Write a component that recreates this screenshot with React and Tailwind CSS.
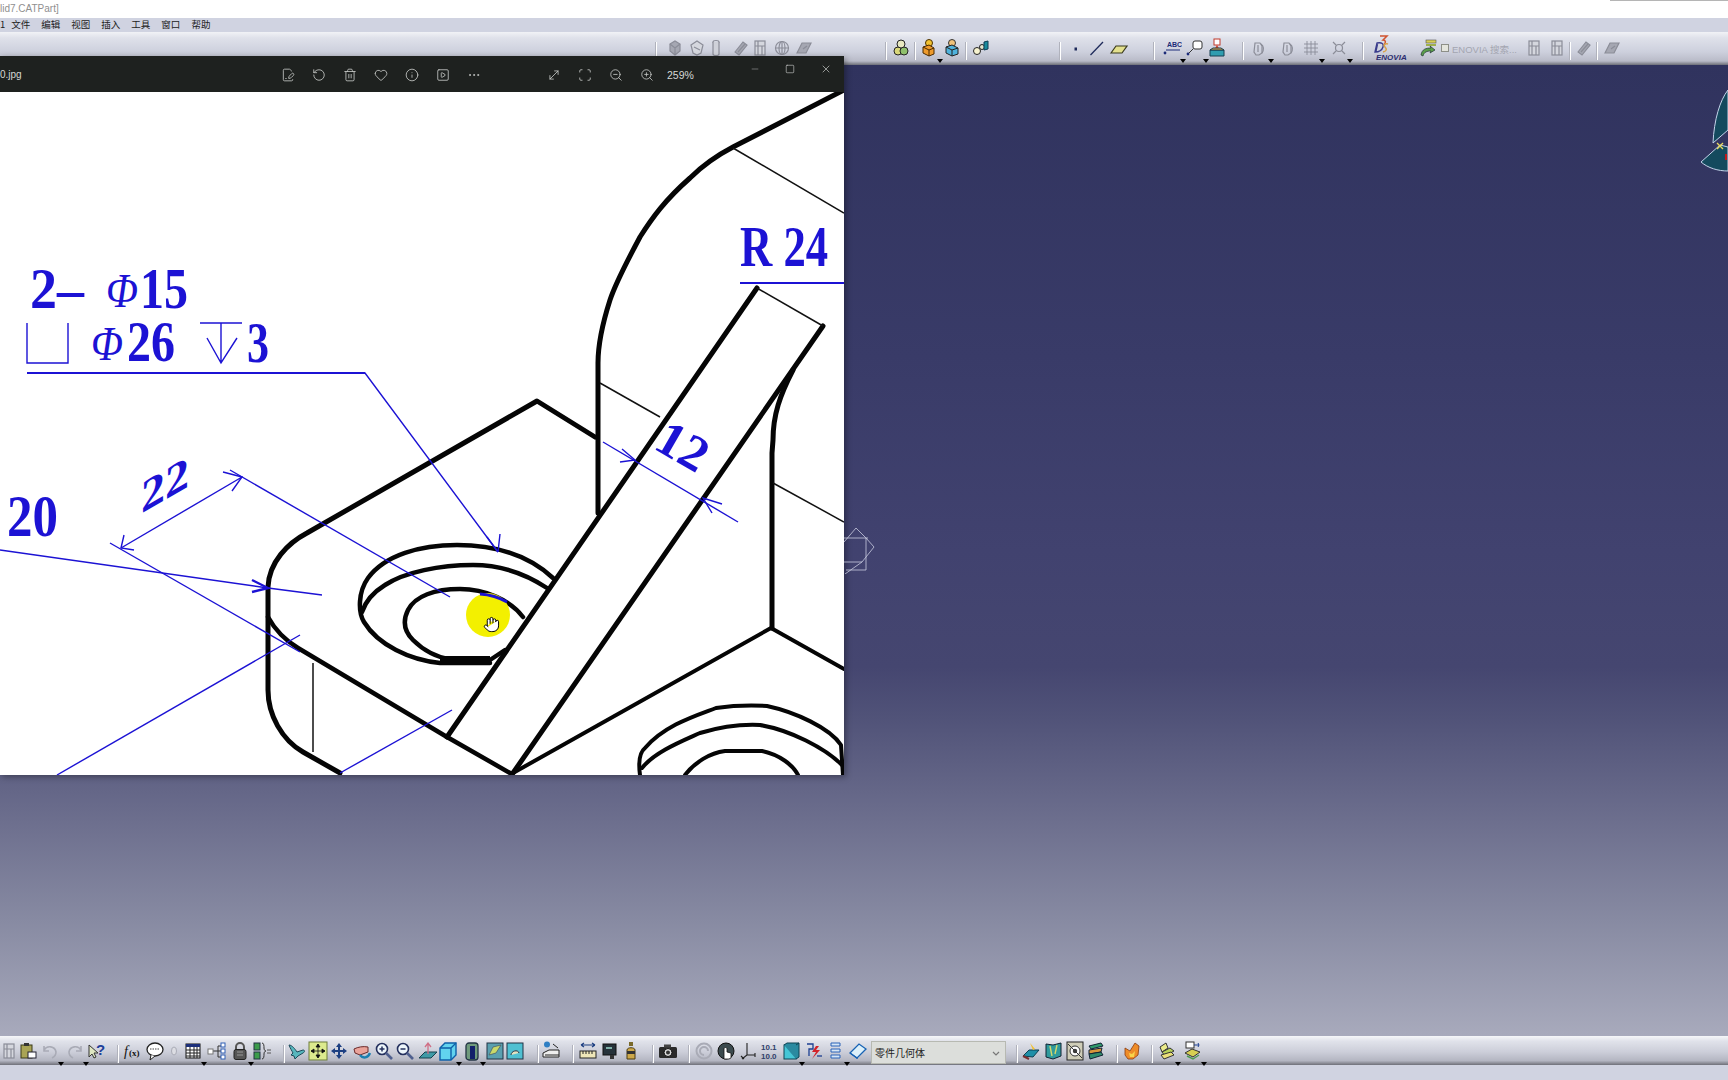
import React from "react";
import {
  FilePenLine, RotateCcw, Trash2, Heart, Info, SquarePlay, Ellipsis,
  MoveDiagonal2, Scan, ZoomIn, ZoomOut, Minus, Square, X, Hand,
} from "lucide-react";

const Ico = ({ children }) => (
  <svg viewBox="0 0 20 20" className="h-5 w-5">{children}</svg>
);

// toolbar cell, m is the left gap to the previous cell
const Slot = ({ m, arrow, children }) => (
  <div className={`relative h-5 w-5 shrink-0 ${m}`}>
    <Ico>{children}</Ico>
    {arrow && (
      <span className="absolute right-[-4px] bottom-[-5px] h-0 w-0 border-x-[3px] border-t-[4px] border-x-transparent border-t-black" />
    )}
  </div>
);

const Sep = ({ m }) => (
  <div className={`h-[18px] w-0.5 shrink-0 self-start mt-1 border-l border-[#b0b2bc] border-r border-r-white ${m}`} />
);

const G = "#a9abb6";
const GD = "#8b8d98";
const Faded = ({ kind = 0 }) => (
  <g fill="none" stroke={GD} strokeWidth="1.2">
    {kind === 0 && <><path d="M5 6l5-3 5 3v7l-5 4-5-4z" fill="#a5a7b2" /><path d="M5 6l5 4 5-4M10 10v7" /></>}
    {kind === 1 && <><path d="M4 7l6-4 6 4-2 8-4 2-4-2z" fill="#d5d7de" /><path d="M7 9l6 3" /></>}
    {kind === 2 && <><ellipse cx="10" cy="4" rx="3" ry="1.5" /><path d="M7 4v12c0 2 6 2 6 0V4" fill="#cfd1d9" /></>}
    {kind === 3 && <><path d="M4 14L12 4l4 3-8 10z" fill="#a5a7b2" /><path d="M7 14l7-8" /></>}
    {kind === 4 && <><rect x="5" y="3" width="10" height="14" fill="#d5d7de" /><path d="M5 8h10M8 3v14M12 8v9" /></>}
    {kind === 5 && <><circle cx="10" cy="10" r="6.5" /><path d="M3.5 10h13M10 3.5v13" /><ellipse cx="10" cy="10" rx="3" ry="6.5" /></>}
    {kind === 6 && <><path d="M3 15l5-10h9l-5 10z" fill="#a5a7b2" /><path d="M9 11l4-3" /></>}
    {kind === 7 && <><path d="M5 5h5l2 3v7l-3 2H6l-2-3z" /><path d="M8 7v7M11 6c3 2 3 6 1 9" /></>}
    {kind === 8 && <><path d="M6 3v14M10 3v14M14 3v14M3 6h14M3 10h14M3 14h14" strokeWidth="0.9" /></>}
    {kind === 9 && <><circle cx="10" cy="10" r="3.5" /><path d="M4 4l3 3M16 4l-3 3M4 16l3-3M16 16l-3-3" /></>}
  </g>
);

const Lens = ({ plus }) => (
  <>
    <circle cx="8" cy="8" r="5.5" fill="#eef6fb" stroke="#24305e" strokeWidth="1.6" />
    <path d="M5.5 8h5" stroke="#24305e" strokeWidth="1.5" />
    {plus && <path d="M8 5.5v5" stroke="#24305e" strokeWidth="1.5" />}
    <path d="M12 12l6 6" stroke="#4f5f8e" strokeWidth="2.6" />
  </>
);

function TopToolbar() {
  return (
    <div className="flex h-[33px] w-full items-start bg-[linear-gradient(to_bottom,#f1f2f6_0%,#dfe1ea_18%,#cdd0dd_60%,#b9bbc8_88%,#6d6f78_100%)] pt-1.5">
      <Sep m="ml-[655px]" />
      <Slot m="ml-[8px]"><Faded kind={0} /></Slot>
      <Slot m="ml-[2px]"><Faded kind={1} /></Slot>
      <Slot m="ml-[-1px]"><Faded kind={2} /></Slot>
      <Slot m="ml-[5px]"><Faded kind={3} /></Slot>
      <Slot m="ml-[-1px]"><Faded kind={4} /></Slot>
      <Slot m="ml-[2px]"><Faded kind={5} /></Slot>
      <Slot m="ml-[2px]"><Faded kind={6} /></Slot>
      <Sep m="ml-[71px]" />
      <Slot m="ml-[4px]">
        <circle cx="7" cy="13" r="4" fill="#d9d77a" stroke="#222" />
        <circle cx="13" cy="13" r="4" fill="#8fc06c" stroke="#222" />
        <circle cx="10" cy="6" r="4" fill="#e8e8c0" stroke="#222" />
      </Slot>
      <Sep m="ml-[3px]" />
      <Slot m="ml-[3px]" arrow>
        <circle cx="10" cy="5" r="3.5" fill="#f2c230" stroke="#4a3000" />
        <path d="M4 9l6-2 5 3v6l-5 2-6-3z" fill="#ed9a2c" stroke="#4a2a00" />
        <path d="M4 9l6 3 5-2M10 12v6" fill="none" stroke="#4a2a00" />
      </Slot>
      <Slot m="ml-[3px]">
        <circle cx="10" cy="5" r="3.5" fill="#f0c27a" stroke="#333" />
        <path d="M4 9l6-2 6 3v6l-6 2-6-3z" fill="#4fb2dc" stroke="#222" />
        <path d="M4 9l6 3 6-2M10 12v6" fill="none" stroke="#222" />
      </Slot>
      <Sep m="ml-[3px]" />
      <Slot m="ml-[4px]">
        <circle cx="6" cy="13" r="3.5" fill="#f7f3cf" stroke="#222" />
        <circle cx="11" cy="9" r="2.5" fill="#e7e7d0" stroke="#222" />
        <path d="M13 4l4-1v8l-4 1z" fill="#188a9c" stroke="#0d3d55" />
      </Slot>
      <Sep m="ml-[68px]" />
      <Slot m="ml-[5px]"><rect x="8.5" y="9.5" width="2.5" height="3" fill="#1e2a5a" /></Slot>
      <Slot m="ml-[1px]"><path d="M3.5 17L16 4" stroke="#1e2a5a" strokeWidth="1.3" /></Slot>
      <Slot m="ml-[2px]"><path d="M2 15l5-7h11l-5 7z" fill="#e3e08e" stroke="#39391c" strokeWidth="1.2" /></Slot>
      <Sep m="ml-[24px]" />
      <Slot m="ml-[7px]" arrow>
        <text x="5" y="9" fontSize="7" fontWeight="700" fill="#1c2b78" fontFamily="Liberation Sans, sans-serif">ABC</text>
        <path d="M4 12h14" stroke="#1c2b78" />
        <circle cx="3" cy="15" r="1.4" fill="#1c2b78" />
      </Slot>
      <Slot m="ml-[3px]" arrow>
        <rect x="8" y="3" width="9" height="8" rx="2" fill="#fff" stroke="#333" />
        <path d="M8 11l-4 4" stroke="#333" />
        <circle cx="3" cy="16" r="1.4" fill="#1c2b78" />
      </Slot>
      <Slot m="ml-[2px]">
        <rect x="7" y="1" width="6" height="6" fill="#fff" stroke="#c0392b" />
        <path d="M10 7l-3 5h6z" fill="#d8452a" />
        <path d="M3 12h14v6H3z" fill="#2f9db0" stroke="#173f50" />
        <path d="M3 12l3-2h8l3 2z" fill="#e9a94a" stroke="#173f50" />
      </Slot>
      <Sep m="ml-[15px]" />
      <Slot m="ml-[6px]" arrow><Faded kind={7} /></Slot>
      <Slot m="ml-[9px]"><Faded kind={7} /></Slot>
      <Slot m="ml-[2px]" arrow><Faded kind={8} /></Slot>
      <Slot m="ml-[8px]" arrow><Faded kind={9} /></Slot>
      <Sep m="ml-[13px]" />
      <div className="ml-[6px] mt-[-3px] flex h-[28px] w-10 shrink-0 flex-col items-start self-start">
        {/* 3DS mark */}
        <svg viewBox="0 0 22 19" className="ml-[3px] h-[19px] w-[22px] shrink-0">
          <path d="M7 1h7l-4 4c3 0 3 3 1 4" fill="none" stroke="#d0532f" strokeWidth="1.5" />
          <path d="M4 8c5-1 7 1 6 4s-4 5-8 5zM4.5 9L3 16" fill="none" stroke="#3a3c8c" strokeWidth="1.4" />
          <path d="M15 9c-3-1-5 1-3 3s2 4-2 5" fill="none" stroke="#d9a24a" strokeWidth="1.6" />
        </svg>
        <span className="ml-[6px] font-['Liberation_Sans',sans-serif] text-[8px] leading-[8px] font-bold italic text-[#2b2d70]">ENOVIA</span>
      </div>
      <Slot m="ml-[8px]">
        <rect x="8" y="2" width="10" height="3" fill="#d8cf55" stroke="#555" strokeWidth="0.6" />
        <rect x="8" y="6" width="10" height="2" fill="#9fb04d" />
        <path d="M3 17c1-6 5-7 10-7l-1-2 5 4-5 3 1-2c-4 0-7 1-8 5z" fill="#5a9e4a" stroke="#233" strokeWidth="0.7" />
      </Slot>
      <div className="ml-[3px] mt-1.5 h-2 w-2 shrink-0 border border-[#8d8f88] bg-[#e4e5dd]" />
      <div className="ml-[3px] mt-1 h-4 w-[67px] shrink-0 overflow-hidden whitespace-nowrap font-['Liberation_Sans','Noto_Sans_CJK_SC',sans-serif] text-[9.5px] leading-4 text-[#a3a5b0]">ENOVIA 搜索...</div>
      <Slot m="ml-[5px]"><Faded kind={4} /></Slot>
      <Slot m="ml-[3px]"><Faded kind={4} /></Slot>
      <Sep m="ml-[2px]" />
      <Slot m="ml-[3px]"><Faded kind={3} /></Slot>
      <Sep m="ml-[2px]" />
      <Slot m="ml-[4px]"><Faded kind={6} /></Slot>
    </div>
  );
}

function BottomToolbar() {
  return (
    <div className="flex h-[29px] w-full shrink-0 items-start bg-[linear-gradient(to_bottom,#f6f7f9_0%,#e0e2ea_18%,#ccced9_55%,#b4b6c2_85%,#6f7079_100%)] pt-[5px]">
      <Slot m="ml-[-1px]"><Faded kind={4} /></Slot>
      <Slot m="ml-[-1px]">
        <rect x="3" y="4" width="11" height="13" fill="#a9a455" stroke="#3b3a1a" />
        <rect x="6" y="2" width="5" height="3" fill="#333" />
        <rect x="10" y="11" width="8" height="6" fill="#fff" stroke="#223" />
      </Slot>
      <Slot m="ml-[2px]" arrow><path d="M4 9c3-5 11-4 12 2 0 3-2 5-4 6M4 5v5h5" fill="none" stroke={G} strokeWidth="1.6" /></Slot>
      <Slot m="ml-[5px]" arrow><path d="M16 9c-3-5-11-4-12 2 0 3 2 5 4 6M16 5v5h-5" fill="none" stroke={G} strokeWidth="1.6" /></Slot>
      <Slot m="ml-[1px]">
        <path d="M3 4v12l3-3 2 4 2-1-2-4h4z" fill="#dfe7c2" stroke="#333" />
        <text x="10" y="14" fontSize="15" fontWeight="700" fill="#1d3f9a" fontFamily="Liberation Sans, sans-serif">?</text>
      </Slot>
      <Sep m="ml-[11px]" />
      <Slot m="ml-[4px]"><text x="1" y="15" fontSize="14" fontFamily="Liberation Serif, serif" fill="#111" fontStyle="italic">f</text><text x="6" y="15" fontSize="9" fontWeight="700" fontFamily="Liberation Serif, serif" fill="#111">(x)</text></Slot>
      <Slot m="ml-[2px]">
        <ellipse cx="10" cy="8.5" rx="8" ry="6.5" fill="#fff" stroke="#222" strokeWidth="1.3" />
        <path d="M6 14l-1 5 5-4" fill="#fff" stroke="#222" />
        <path d="M5 8h10" stroke="#444" strokeDasharray="1.5 1" />
      </Slot>
      <Slot m="ml-[-1px]"><ellipse cx="10" cy="10" rx="2.5" ry="4" fill="#dcdde3" stroke={G} /></Slot>
      <Slot m="ml-[-1px]" arrow>
        <rect x="3" y="3" width="14" height="14" fill="#fff" stroke="#111" />
        <rect x="3" y="3" width="14" height="3" fill="#1c2f7a" />
        <path d="M3 9h14M3 12h14M3 15h14M7 6v11M11 6v11M14 6v11" stroke="#222" />
      </Slot>
      <Slot m="ml-[4px]">
        <path d="M5 10h6M11 5v11M11 5h3M11 10h3M11 16h3" fill="none" stroke="#333" />
        <rect x="1" y="8" width="5" height="5" fill="#fff" stroke="#777" />
        <rect x="14" y="2" width="4" height="4" fill="#fff" stroke="#2e5fb5" />
        <rect x="14" y="8" width="4" height="4" fill="#fff" stroke="#2e5fb5" />
        <rect x="14" y="14" width="4" height="4" fill="#fff" stroke="#2e5fb5" />
      </Slot>
      <Slot m="ml-[3px]" arrow>
        <path d="M6 9V6a4 4 0 018 0v3" fill="none" stroke="#555" strokeWidth="2" />
        <rect x="4" y="8.5" width="12" height="10" rx="2" fill="#555" stroke="#222" />
        <path d="M7 11h6M7 14h6" stroke="#999" />
      </Slot>
      <Slot m="ml-[2px]">
        <rect x="2" y="2" width="6" height="7" fill="#3c9c4c" stroke="#234" />
        <rect x="2" y="11" width="6" height="7" fill="#3c9c4c" stroke="#234" />
        <path d="M10 2c2 0 2 3 2 5s1 3 2 3c-1 0-2 1-2 3s0 5-2 5" fill="none" stroke="#333" />
        <path d="M15 9h4M15 12h4" stroke="#555" />
      </Slot>
      <Sep m="ml-[11px]" />
      <Slot m="ml-[2px]">
        <path d="M2 4c3 0 6 4 8 7l6-2c2 0 2 2 0 3l-5 3-3 3-1-3-3-1 2-2C5 10 3 7 2 4z" fill="#57b6bd" stroke="#1c4a5a" />
      </Slot>
      <Slot m="ml-[1px]">
        <rect x="1" y="1" width="18" height="18" fill="#dcea8e" stroke="#6c7c3a" />
        <path d="M10 3v14M3 10h14M10 3l-2 3h4zM10 17l-2-3h4zM3 10l3-2v4zM17 10l-3-2v4z" fill="#111" stroke="#111" strokeWidth="0.8" />
      </Slot>
      <Slot m="ml-[1px]">
        <path d="M10 2l3 4h-2v3h3V7l4 3-4 3v-2h-3v3h2l-3 4-3-4h2v-3H6v2l-4-3 4-3v2h3V6H7z" fill="#1c3f82" />
      </Slot>
      <Slot m="ml-[3px]">
        <path d="M2 8c4-2 9-3 14-2v5l-8 3-5-2z" fill="#eaa39a" stroke="#6a2a2a" />
        <path d="M8 14c3 4 8 3 10-2" fill="none" stroke="#1b7fb0" strokeWidth="2.4" />
      </Slot>
      <Slot m="ml-[2px]"><Lens plus /></Slot>
      <Slot m="ml-[1px]"><Lens /></Slot>
      <Slot m="ml-[3px]">
        <path d="M1 17l6-6h12l-6 6z" fill="#3f9aa6" stroke="#17414e" />
        <path d="M10 13V3M7 6l3-4 3 4" fill="none" stroke="#d06f86" strokeWidth="1.3" />
      </Slot>
      <Slot m="ml-[0px]" arrow>
        <path d="M2 7l5-5h11v12l-5 5H2z" fill="#62d3ee" stroke="#0d5fa8" strokeWidth="1.4" />
        <path d="M2 7h11v12M13 7l5-5" fill="none" stroke="#0d5fa8" strokeWidth="1.4" />
      </Slot>
      <Slot m="ml-[4px]" arrow>
        <rect x="4" y="2" width="12" height="17" rx="3" fill="#6f9a7c" stroke="#234" strokeWidth="1.3" />
        <rect x="8" y="5" width="5" height="13" fill="#12206a" />
      </Slot>
      <Slot m="ml-[3px]">
        <rect x="2" y="2" width="16" height="16" fill="#5aa0b0" stroke="#234" />
        <path d="M4 14l4-8 8-2-5 8z" fill="#c9d96a" stroke="#456" strokeWidth="0.7" />
      </Slot>
      <Slot m="ml-[0px]">
        <rect x="2" y="2" width="16" height="16" fill="#4fc0d2" stroke="#234" />
        <path d="M6 14c0-4 7-6 8-2" fill="#e4e2c0" stroke="#234" />
      </Slot>
      <Sep m="ml-[12px]" />
      <Slot m="ml-[2px]">
        <circle cx="6" cy="3.5" r="3" fill="#2f7fc4" />
        <path d="M2 12l6-3h10v7H2z" fill="#eee" stroke="#222" />
        <path d="M4 14h14M12 3l5 4" stroke="#222" />
      </Slot>
      <Sep m="ml-[11px]" />
      <Slot m="ml-[4px]">
        <path d="M3 4h14M3 4l3-2M3 4l3 2M17 4l-3-2M17 4l-3 2" fill="none" stroke="#1d3f82" strokeWidth="1.2" />
        <rect x="2" y="10" width="16" height="7" fill="#eee6b8" stroke="#222" />
        <path d="M5 10v3M8 10v3M11 10v3M14 10v3" stroke="#222" />
      </Slot>
      <Slot m="ml-[2px]">
        <rect x="3" y="3" width="13" height="11" fill="#26323a" stroke="#111" />
        <rect x="6" y="6" width="6" height="2" fill="#7fb0a8" />
        <rect x="10" y="14" width="4" height="4" fill="#333" />
      </Slot>
      <Slot m="ml-[1px]">
        <rect x="8" y="1" width="4" height="4" fill="#7a6a2a" />
        <path d="M6 9c0-3 8-3 8 0v9H6z" fill="#cda84a" stroke="#4a3a10" />
        <rect x="6" y="10" width="8" height="3" fill="#333" />
      </Slot>
      <Sep m="ml-[11px]" />
      <Slot m="ml-[4px]">
        <rect x="1" y="6" width="18" height="11" rx="1.5" fill="#2a2a2a" />
        <rect x="6" y="3.5" width="7" height="3" fill="#444" />
        <circle cx="10" cy="11.5" r="4" fill="#ddd" stroke="#111" />
        <circle cx="10" cy="11.5" r="2" fill="#333" />
      </Slot>
      <Sep m="ml-[10px]" />
      <Slot m="ml-[4px]">
        <circle cx="10" cy="10" r="7.5" fill="none" stroke={G} strokeWidth="2" />
        <path d="M14 10a4 4 0 10-4 4" fill="none" stroke={G} strokeWidth="2" />
      </Slot>
      <Slot m="ml-[2px]">
        <circle cx="10" cy="10" r="8" fill="#3b4a4e" stroke="#111" />
        <path d="M8 18V8c0-2 3-2 3 0v3l4 1v5l-2 1z" fill="#fff" stroke="#111" strokeWidth="0.8" />
      </Slot>
      <Slot m="ml-[2px]"><path d="M9 2v12l-5 4M9 14h8M17 12v4M3 15l3 3" fill="none" stroke="#222" strokeWidth="1.1" /></Slot>
      <Slot m="ml-[0px]">
        <text x="3" y="9" fontSize="8" fontWeight="700" fill="#30406a" fontFamily="Liberation Sans, sans-serif">10.1</text>
        <text x="3" y="18" fontSize="8" fontWeight="700" fill="#30406a" fontFamily="Liberation Sans, sans-serif">10.0</text>
      </Slot>
      <Slot m="ml-[3px]" arrow>
        <rect x="3" y="4" width="12" height="14" fill="#45c6d6" stroke="#0e4454" />
        <path d="M3 4l3-2h12v14l-3 2M15 4l3-2" fill="#2a8aa0" stroke="#0e4454" />
      </Slot>
      <Slot m="ml-[3px]">
        <path d="M3 3h6v5H5v7" fill="none" stroke="#1c3f92" strokeWidth="1.3" />
        <path d="M12 5l-4 6h4l-4 7 8-9h-4l3-4z" fill="#d2232a" />
        <path d="M13 15h5" stroke="#1c3f92" strokeWidth="1.3" />
      </Slot>
      <Slot m="ml-[2px]" arrow>
        <path d="M5 2h9v3H5zM5 8h9v3H5zM5 14h9v3H5z" fill="#d6e6f6" stroke="#2b62b8" />
      </Slot>
      <Slot m="ml-[2px]">
        <path d="M2 12l9-9 7 5-9 9z" fill="#dcf0fa" stroke="#1762b4" strokeWidth="1.3" />
        <path d="M2 12l7 5v1" fill="none" stroke="#1762b4" strokeWidth="1.3" />
      </Slot>
      <div className="ml-[3px] flex h-[23px] w-[135px] shrink-0 items-center justify-between border border-[#b7b9b2] bg-[#dcdedb] pr-1 pl-[3px]">
        <span className="font-['Noto_Sans_CJK_SC',sans-serif] text-[10px] leading-none text-[#222]">零件几何体</span>
        <svg viewBox="0 0 10 10" className="h-2.5 w-2.5"><path d="M2 4l3 3 3-3" fill="none" stroke="#777" strokeWidth="1.2" /></svg>
      </div>
      <Sep m="ml-[10px]" />
      <Slot m="ml-[3px]">
        <path d="M2 15l6-6h10l-6 7z" fill="#1f8fa8" stroke="#0e3f50" />
        <path d="M9 2l3 7 2-1z" fill="#f2c230" />
        <path d="M2 15l6 3" stroke="#7a3030" strokeWidth="2" />
      </Slot>
      <Slot m="ml-[3px]">
        <path d="M2 3l7 1 8-2v13l-8 3-7-2z" fill="#2f9a9c" stroke="#123" />
        <path d="M6 5l2 10M13 4l-2 9" stroke="#d3d86a" strokeWidth="1.4" />
      </Slot>
      <Slot m="ml-[1px]">
        <rect x="2" y="1" width="16" height="18" fill="#cfcdb8" stroke="#222" />
        <circle cx="10" cy="10" r="5" fill="#fff" stroke="#333" />
        <path d="M3 3l14 14" stroke="#333" />
        <circle cx="10" cy="10" r="2.2" fill="#3a3a3a" />
      </Slot>
      <Slot m="ml-[1px]">
        <path d="M3 5l12-3 2 3-12 3z" fill="#2f9a6c" stroke="#123" />
        <path d="M3 9l13-2-1 4-12 2z" fill="#d8963a" stroke="#123" />
        <path d="M3 13l12-2 2 3-13 4z" fill="#2f8a6a" stroke="#123" />
      </Slot>
      <Sep m="ml-[10px]" />
      <Slot m="ml-[4px]">
        <path d="M3 7l5 3 5-8 4 3-1 9-5 4H6l-3-4z" fill="#ee8c28" stroke="#8a3b10" strokeWidth="0.8" />
        <path d="M7 12l3 1 3-3-1 6H8z" fill="#f7d44c" />
      </Slot>
      <Sep m="ml-[9px]" />
      <Slot m="ml-[4px]" arrow>
        <path d="M3 6l6-4 2 5-6 4z" fill="#eaea8a" stroke="#333" />
        <path d="M5 11l8-4 4 3-9 5z" fill="#b9d35a" stroke="#333" />
        <path d="M4 14l10-3 3 3-10 4z" fill="#eadf7a" stroke="#333" />
      </Slot>
      <Slot m="ml-[6px]" arrow>
        <rect x="3" y="1" width="8" height="6" fill="#fff" stroke="#333" />
        <path d="M11 4h5l-1-2M16 4l-1 2" fill="none" stroke="#1c3f92" />
        <path d="M2 12l7-4 8 3-7 5z" fill="#d7cf52" stroke="#333" />
        <path d="M4 15l6 3 6-4" fill="none" stroke="#4d9a50" strokeWidth="1.4" />
      </Slot>
    </div>
  );
}

const serif = "Liberation Serif, serif";

function Drawing() {
  const b = "#1c12d4";
  return (
    <svg viewBox="0 92 844 683" className="block h-[683px] w-[844px] bg-white">
      <g fill="none" stroke="#050505" strokeWidth="5" strokeLinejoin="round" strokeLinecap="round">
        <path d="M844 90L733 147C712 158 700 168 690 178C665 200 652 218 640 237C625 265 615 285 610 300C602 325 598 345 598 363V513" />
        <path d="M757 288L447 737" />
        <path d="M823 326L513 773" />
        <path d="M793 370C780 395 773 415 773 440L772 453V628" />
        <path d="M771 628L844 669M771 628L513 773" strokeWidth="4" />
        <path d="M595 437L537 401L307 533C288 543 269 562 268 587V690C268 715 282 740 303 752L340 773" />
        <path d="M268 617C275 630 285 640 298 648L447 737L510 773" strokeWidth="4.5" />
        {/* counterbore rings */}
        <path d="M553 578C525 552 490 545 457 545C420 545 385 555 368 578C358 592 358 612 364 622C378 645 410 660 440 663H490" strokeWidth="4.5" />
        <path d="M547 588C520 570 495 565 473 565C440 565 405 572 385 585C372 593 365 603 362 612" strokeWidth="4.5" />
        <path d="M523 617C510 600 485 589 460 589C435 589 415 596 408 610C402 622 405 632 413 640C425 652 440 658 452 660H490L505 650" strokeWidth="4.5" />
        <path d="M440 660H490" strokeWidth="8" strokeLinecap="butt" />
        {/* lower boss */}
        <path d="M640 775C638 760 640 752 645 748C665 725 695 716 716 708C730 706 750 705 767 706C795 712 830 728 841 745L843 775" strokeWidth="4" />
        <path d="M642 768C655 752 680 742 700 733C720 727 740 724 760 725C790 730 825 748 842 765" strokeWidth="4" />
        <path d="M685 775C695 762 710 753 725 751H762C780 755 793 765 798 775" strokeWidth="4" />
      </g>
      <g fill="none" stroke="#111" strokeWidth="1.5">
        <path d="M733 148L844 213" />
        <path d="M600 383L660 417" />
        <path d="M757 288L823 326" />
        <path d="M773 483L844 522" />
        <path d="M313 663V752" />
      </g>
      <g fill="none" stroke={b} strokeWidth="1.4">
        <path d="M27 373H365L498 552" />
        <path d="M740 283H844" strokeWidth="2" />
        <path d="M27 373H365" strokeWidth="2" />
        <path d="M27 323V363H68V323" />
        <path d="M200 323H242M221 323V363M207 338L221 363L237 338" />
        <path d="M230 470L450 597" />
        <path d="M121 548L242 477" />
        <path d="M110 543L300 652" />
        <path d="M0 550L268 588L322 595" />
        <path d="M57 775L300 635" />
        <path d="M340 773L452 710" />
        <path d="M603 442L738 522" />
        <path d="M487 537L498 552M500 534L498 552" />
        <path d="M223 472L242 477L232 491" />
        <path d="M124 535L121 548L134 550" />
        <path d="M622 449L635 460L620 462" />
        <path d="M722 504L703 498L712 513" />
        <path d="M252 580L268 588L252 592" strokeWidth="2.4" />
      </g>

      <g fill={b} fontFamily={serif} fontWeight="700">
        <text x="30" y="308" fontSize="56" textLength="54" lengthAdjust="spacingAndGlyphs">2–</text>
        <text x="140" y="308" fontSize="56" textLength="48" lengthAdjust="spacingAndGlyphs">15</text>
        <text x="127" y="361" fontSize="56" textLength="48" lengthAdjust="spacingAndGlyphs">26</text>
        <text x="247" y="362" fontSize="56" textLength="22" lengthAdjust="spacingAndGlyphs">3</text>
        <text x="7" y="536" fontSize="60" textLength="51" lengthAdjust="spacingAndGlyphs">20</text>
        <text transform="translate(740 266) scale(0.77 1)" fontSize="58">R 24</text>
        <text transform="translate(165 485) skewY(-30)" x="-24" y="15" fontSize="46" textLength="48" lengthAdjust="spacingAndGlyphs">22</text>
        <text transform="translate(683 446) rotate(30)" x="-26" y="17" fontSize="50" textLength="52" lengthAdjust="spacingAndGlyphs">12</text>
      </g>
      <g fill={b} fontFamily={serif}>
        <text x="106" y="307" fontSize="48" fontStyle="italic" textLength="32" lengthAdjust="spacingAndGlyphs">Φ</text>
        <text x="91" y="360" fontSize="48" fontStyle="italic" textLength="32" lengthAdjust="spacingAndGlyphs">Φ</text>
      </g>

      <circle cx="488" cy="615" r="22" fill="#f3f000" />
      <path d="M480 594Q495 595 507 602" fill="none" stroke={b} strokeWidth="3" />
    </svg>
  );
}

function PhotoWindow() {
  const icon = "h-[14px] w-[14px] text-[#c9cbc9]";
  return (
    <div className="absolute top-[56px] left-0 w-[844px] shadow-[2px_2px_6px_rgba(0,0,0,0.35)]">
      <div className="relative flex h-9 items-center bg-[#1e211f] font-['Liberation_Sans',sans-serif] text-[#d6d8d6]">
        <span className="w-[281px] pt-0.5 text-[10px] leading-none">0.jpg</span>
        <div className="flex items-center gap-[17px] pt-0.5">
          <FilePenLine className={icon} strokeWidth={1.4} />
          <RotateCcw className={icon} strokeWidth={1.4} />
          <Trash2 className={icon} strokeWidth={1.4} />
          <Heart className={icon} strokeWidth={1.4} />
          <Info className={icon} strokeWidth={1.4} />
          <SquarePlay className={icon} strokeWidth={1.4} />
          <Ellipsis className={icon} strokeWidth={1.4} />
        </div>
        <div className="ml-[66px] flex items-center gap-[17px] pt-0.5">
          <MoveDiagonal2 className={`${icon} -scale-x-100`} strokeWidth={1.4} />
          <Scan className={icon} strokeWidth={1.4} />
          <ZoomOut className={icon} strokeWidth={1.4} />
          <ZoomIn className={icon} strokeWidth={1.4} />
        </div>
        <span className="ml-[13px] pt-0.5 text-[10.5px] leading-none">259%</span>
        <div className="absolute top-[7px] right-[12px] flex items-center gap-[25px]">
          <Minus className="h-[10px] w-[10px] text-[#b8bab8]" strokeWidth={1.2} />
          <Square className="h-[10px] w-[10px] text-[#d6d8d6]" strokeWidth={1.4} />
          <X className="h-[12px] w-[12px] text-[#d6d8d6]" strokeWidth={1.3} />
        </div>
      </div>
      <div className="relative">
        <Drawing />
        <Hand className="absolute top-[524px] left-[483px] h-[17px] w-[17px] fill-white text-black" strokeWidth={1.4} />
      </div>
    </div>
  );
}

export default function App() {
  return (
    <div className="relative flex h-[1080px] w-[1728px] flex-col overflow-hidden font-['Liberation_Sans',sans-serif]">
      <div className="relative h-[18px] shrink-0 bg-white">
        <span className="block pt-1 pl-0 text-[10px] leading-none text-[#8f8f8f]">lid7.CATPart]</span>
        <div className="absolute top-0 right-0 h-px w-[118px] bg-[#b5b5b5]" />
      </div>
      <div className="flex h-[14px] shrink-0 items-center gap-[11px] bg-[#d0d3e1] font-['Noto_Sans_CJK_SC',sans-serif] text-[9.5px] leading-none text-[#222]">
        <span className="mr-[-5px]">1</span>
        <span>文件</span><span>编辑</span><span>视图</span><span>插入</span><span>工具</span><span>窗口</span><span>帮助</span>
      </div>
      <TopToolbar />
      <div className="min-h-0 flex-1 bg-[linear-gradient(to_bottom,#30335e_0%,#393b68_30%,#41426f_50%,#454670_62%,#505278_67%,#6d6f8e_78%,#878aa2_88%,#a8aabc_100%)]" />
      <BottomToolbar />
      <div className="h-[15px] shrink-0 bg-[#d0d3e1]" />

      <PhotoWindow />

      {/* axis system behind the window */}
      <svg viewBox="0 0 32 50" className="absolute top-[524px] left-[844px] h-[50px] w-[32px]" fill="none" stroke="#c9cbe0" strokeWidth="0.8">
        <path d="M0 18L12 4L22 14V46H2M0 14H24M30 23L18 38H0M18 38L1 50M22 14L30 23" />
      </svg>

      {/* compass, cut by the right edge */}
      <svg viewBox="0 0 60 120" className="absolute top-[60px] left-[1668px] h-[120px] w-[60px]">
        <path d="M45 83C46 60 52 40 60 30V70Z" fill="#144a5e" stroke="#c4d4ea" strokeWidth="1" />
        <path d="M33 102L52 85L60 87V111C50 111 40 108 33 102Z" fill="#144a5e" stroke="#c4d4ea" strokeWidth="1" />
        <path d="M49 83L55 89M55 83L49 89" stroke="#e8d860" strokeWidth="1.4" />
        <path d="M58 94V100" stroke="#c01818" strokeWidth="2" />
      </svg>
    </div>
  );
}
